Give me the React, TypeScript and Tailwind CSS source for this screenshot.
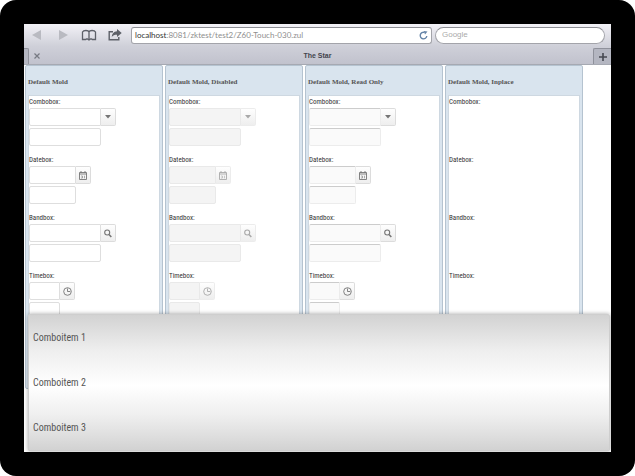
import clsx from "clsx";

type Mode = "normal" | "disabled" | "readonly" | "inplace";
type IconName = "arrow" | "calendar" | "search" | "clock";

const COLUMNS: { title: string; mode: Mode }[] = [
  { title: "Default Mold", mode: "normal" },
  { title: "Default Mold, Disabled", mode: "disabled" },
  { title: "Default Mold, Read Only", mode: "readonly" },
  { title: "Default Mold, Inplace", mode: "inplace" },
];

const FIELDS: { label: string; icon: IconName; width: string }[] = [
  { label: "Combobox", icon: "arrow", width: "w-[72px]" },
  { label: "Datebox", icon: "calendar", width: "w-[47px]" },
  { label: "Bandbox", icon: "search", width: "w-[72px]" },
  { label: "Timebox", icon: "clock", width: "w-[31px]" },
];

const INPUT_STYLE: Record<Mode, string> = {
  normal: "border-[#dedede] bg-white",
  disabled: "border-[#e9e9e9] bg-[#f4f4f4]",
  readonly: "border-[#ececec] border-t-[#cccccc] bg-[#fafafa]",
  inplace: "border-transparent bg-transparent",
};

const ITEMS = ["Comboitem 1", "Comboitem 2", "Comboitem 3"];

const NARROW = "font-['Roboto_Condensed','Liberation_Sans',sans-serif]";

export default function App() {
  return (
    <div className="flex min-h-screen flex-col rounded-[16px] bg-black p-6 font-['Liberation_Sans',sans-serif]">
      <div className="relative flex flex-1 flex-col overflow-hidden bg-white">
        <Toolbar />
        <TabBar />
        <main className="grid grid-cols-4 gap-0.5 pr-7 pl-px">
          {COLUMNS.map((c) => (
            <Panel key={c.mode} title={c.title} mode={c.mode} />
          ))}
        </main>
        <ul
          role="listbox"
          aria-label="Combobox items"
          className={clsx(
            "absolute right-px bottom-px left-1 rounded-t-[2px] border border-[#cecece] bg-[linear-gradient(#d2d2d2,#eeeeee_26%,#ffffff_52%,#f0f0f0_73%,#e0e0e0_88%,#d2d2d2)] text-[10px] text-[#555] shadow-[0_0_4px_rgba(0,0,0,0.35)]",
            NARROW,
          )}
        >
          {ITEMS.map((item) => (
            <li key={item} role="option" aria-selected={false} className="flex h-[45px] items-center px-1">
              {item}
            </li>
          ))}
        </ul>
      </div>
    </div>
  );
}

function Toolbar() {
  return (
    <header className="flex h-[22px] items-center bg-linear-to-b from-[#f3f2f7] to-[#cfd0d9] pr-1.5">
      <nav className="mr-[3px] flex text-[#5d6068]">
        <button aria-label="Back" className="flex w-[26px] justify-center text-[#b9bac1]">
          <svg width="10" height="12" viewBox="0 0 10 12" fill="currentColor"><path d="M9 1v10L0 6z" /></svg>
        </button>
        <button aria-label="Forward" className="flex w-[26px] justify-center text-[#b9bac1]">
          <svg width="10" height="12" viewBox="0 0 10 12" fill="currentColor"><path d="M1 1v10l9-5z" /></svg>
        </button>
        <button aria-label="Bookmarks" className="flex w-[26px] justify-center">
          <svg width="16" height="12" viewBox="0 0 16 12" fill="none" stroke="currentColor" strokeWidth="1.3">
            <path d="M8 10.500V3C7.500 1 2.500 1 1.500 3v7.500h3.200l1.300-.8 2 1.300 2-1.300 1.300.8h3.200V3C13.500 1 8.500 1 8 3" />
          </svg>
        </button>
        <button aria-label="Share" className="flex w-[26px] justify-center">
          <svg width="14" height="12" viewBox="0 0 14 12" fill="none" stroke="currentColor" strokeWidth="1.4">
            <path d="M5 2.700H1.200v8h9.600V8" />
            <path d="M13.700 4 9 0v2.300C5.600 2.600 4 4.500 3.700 8 5 6.200 6.500 5.700 9 5.700V8z" fill="currentColor" stroke="none" />
          </svg>
        </button>
      </nav>
      <div className="mr-[3px] flex h-[17px] flex-[293] items-center rounded-[3px] border border-[#a3a4aa] border-t-[#8d8e94] bg-white px-[3px]">
        <p className="flex-1 font-['Lato',sans-serif] text-[8px] text-[#8e8e8e]">
          <span className="text-[#333]">localhost</span>:8081/zktest/test2/Z60-Touch-030.zul
        </p>
        <button aria-label="Reload" className="text-[#6685a8]">
          <svg width="9" height="9" viewBox="0 0 9 9" fill="none" stroke="currentColor" strokeWidth="1.4">
            <path d="M7.800 5A3.300 3.300 0 1 1 5.500 1.400" />
            <path d="M4.800 0 8.500.6 6 3.600z" fill="currentColor" stroke="none" />
          </svg>
        </button>
      </div>
      <div className="flex h-[17px] flex-[156] rounded-full border border-[#a3a4aa] border-t-[#8d8e94] bg-white px-1.5">
        <input
          type="text"
          aria-label="Search"
          placeholder="Google"
          className="w-full min-w-0 text-[8px] placeholder:text-[#aaa]"
        />
      </div>
    </header>
  );
}

function TabBar() {
  return (
    <div className="flex h-[19px] items-end border-b border-[#a6a9b2] bg-linear-to-b from-[#cfd0d9] to-[#c1c2cd]">
      <div className="h-4 w-[5px] rounded-tr-[2px] border-t border-r border-[#8f919b] bg-[#b4b6c1]" />
      <div className="flex h-4 flex-1 items-center">
        <button aria-label="Close tab" className="flex w-4 justify-center text-[#767982]">
          <svg width="6" height="6" viewBox="0 0 6 6" stroke="currentColor" strokeWidth="1.200"><path d="m.5.5 5 5m0-5-5 5" /></svg>
        </button>
        <h1 className="flex-1 pr-[3px] text-center text-[7px] font-bold text-[#43454d]">The Star</h1>
      </div>
      <button
        aria-label="New tab"
        className="flex h-4 w-[18px] items-center justify-center rounded-tl-[2px] border-t border-l border-[#8f919b] bg-[#b4b6c1] text-[#454850]"
      >
        <svg width="8" height="8" viewBox="0 0 8 8" stroke="currentColor" strokeWidth="1.600"><path d="M4 0v8M0 4h8" /></svg>
      </button>
    </div>
  );
}

function Panel({ title, mode }: { title: string; mode: Mode }) {
  return (
    <section className="rounded-[2px] border border-[#b5c3d0] bg-[#d9e4ee] px-0.5 pb-[3px]">
      <h2 className="flex h-[29px] items-center pt-1 font-['Liberation_Serif',serif] text-[7px] font-bold whitespace-nowrap text-[#555]">
        {title}
      </h2>
      <div className="border border-[#ced8e1] bg-white pb-14">
        {FIELDS.map((f) => (
          <div key={f.label} className="mb-2 flex flex-col items-start">
            <label htmlFor={`${mode}-${f.label}`} className={clsx("h-3 text-[7px] leading-[12px] text-[#333]", NARROW)}>
              {f.label}:
            </label>
            <div className="mb-0.5 flex h-[18px]">
              <input
                id={`${mode}-${f.label}`}
                disabled={mode === "disabled"}
                readOnly={mode === "readonly"}
                className={clsx("rounded-l-[2px] border px-1 text-[7px]", f.width, INPUT_STYLE[mode])}
              />
              {mode !== "inplace" && (
                <button
                  aria-label={`Open ${f.label}`}
                  disabled={mode === "disabled"}
                  className={clsx(
                    "flex w-[15px] items-center justify-center rounded-r-[2px] border border-l-0 bg-linear-to-b from-[#fefefe] to-[#eeeeee]",
                    mode === "disabled" ? "border-[#ececec] text-[#a9a9a9]" : "border-[#dcdcdc] text-[#757575]",
                  )}
                >
                  <FieldIcon name={f.icon} />
                </button>
              )}
            </div>
            <input
              aria-label={`${f.label} without button`}
              disabled={mode === "disabled"}
              readOnly={mode === "readonly"}
              className={clsx("h-[18px] rounded-[2px] border px-1 text-[7px]", f.width, INPUT_STYLE[mode])}
            />
          </div>
        ))}
      </div>
    </section>
  );
}

function FieldIcon({ name }: { name: IconName }) {
  if (name === "arrow") {
    return <svg width="6" height="4" viewBox="0 0 6 4" fill="currentColor"><path d="M0 0h6L3 3.600z" /></svg>;
  }
  if (name === "calendar") {
    return (
      <svg width="8" height="9" viewBox="0 0 8 9" fill="none" stroke="currentColor">
        <path d="M.5 1.500h7v7h-7zM.5 3h7M2 0v2M6 0v2" strokeWidth=".9" />
        <path d="M2 5h1.500v2H2M5.500 4.700v2.600" strokeWidth=".6" />
      </svg>
    );
  }
  if (name === "search") {
    return (
      <svg width="8" height="9" viewBox="0 0 8 9" fill="none" stroke="currentColor">
        <circle cx="3.200" cy="3.500" r="2.500" strokeWidth="1.100" />
        <path d="m5 5.500 2.300 2.500" strokeWidth="1.600" />
      </svg>
    );
  }
  return (
    <svg width="9" height="9" viewBox="0 0 9 9" fill="none" stroke="currentColor">
      <circle cx="4.500" cy="4.500" r="3.800" strokeWidth=".9" />
      <path d="M4.500 1.500v3h2.800" strokeWidth=".9" />
    </svg>
  );
}
